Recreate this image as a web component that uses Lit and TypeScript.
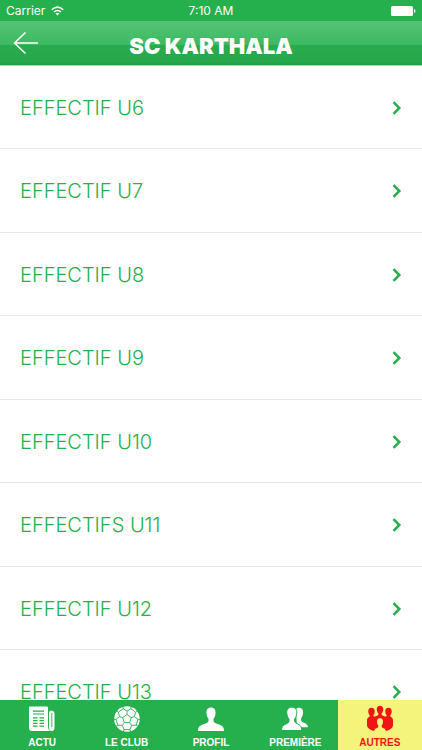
import { LitElement, html, css, svg } from "lit";
import { customElement, state } from "lit/decorators.js";
import { classMap } from "lit/directives/class-map.js";

const icons = {
  news: svg`
    <path fill="#fff" d="M1 .5h17q1 0 1 1v19q0 3.500 2.500 4.500H3Q0 25 0 22V1.500Q0 .5 1 .5z"/>
    <path fill="#fff" d="M20 7q0-2.500 2.500-2.500T25.500 7v14.500q0 3.500-2.700 3.500-2.800 0-2.800-3.500z"/>
    <path stroke="#25b04d" stroke-width=".9" fill="none" d="M22.800 7v14"/>
    <path stroke="#25b04d" stroke-width="1.200" fill="none" d="M4 5.200h11M4 8h11M4 11.800h4.500M10.500 11.800H15M4 14.600h4.500M10.500 14.600H15M4 17.400h4.500M10.500 17.400H15M4 20.200h4.500M10.500 20.200H15"/>`,
  ball: svg`
    <circle cx="13" cy="13" r="12.800" fill="#fff"/>
    <path fill="none" stroke="#25b04d" stroke-width=".9" stroke-linejoin="round" d="M13 8.500l4.300 3.100-1.600 5h-5.400l-1.600-5zM13 8.500V5.200M17.300 11.600l3.100-1M15.700 16.600l1.900 2.700M10.300 16.600l-1.900 2.700M8.700 11.600l-3.100-1M9.200 2.700L13 5.200l3.800-2.500 4.900 3.500-1.300 4.400 3.600 2.800-1.900 5.800-4.500.1L16 23.600h-6l-1.600-4.300-4.500-.1L2 13.400l3.600-2.800-1.300-4.400zM9.200 2.700L8.800 0M16.800 2.700l.4-2.700M21.700 6.200l2.300-1.600M24 13.400h2M22.100 19.200l2 1.400M16 23.600l.6 2.400M10 23.600L9.400 26M3.900 19.200l-2 1.400M2 13.400H0M4.300 6.200L2 4.600"/>`,
  person: svg`
    <path fill="#fff" d="M13 1.500c3.300 0 4.700 2.300 4.500 5.200-.1 3-.9 4.800-2 6v2.500c.3 1.600 2.500 2.200 5.500 3.300 3.400 1.200 5 2.500 5 6.500H0c0-4 1.600-5.300 5-6.500 3-1.100 5.200-1.700 5.500-3.300v-2.500c-1.100-1.200-1.900-3-2-6C8.300 3.800 9.700 1.500 13 1.500z"/>`,
  pair: svg`
    <path fill="#fff" d="M14 3c1-1 2.500-1.500 3.700-1.300 2.500.2 3.500 2.300 3.300 5-.1 2.400-.8 4.300-1.900 5.500v2.100c.4 1.500 1.700 2 3.400 2.700 2.300 1 3.300 2 3.500 4.200H15z"/>
    <path fill="#fff" stroke="#25b04d" stroke-width="1" d="M9.800 1.200c3.700 0 5.200 2.500 5 5.700-.1 2.500-.9 4.600-2.200 6v2.300c.5 1.700 2 2.300 3.800 3.200 2.500 1.200 3.200 2.700 3.400 6.100H-.5c.1-3.400 1.100-4.900 3.500-6.100 1.900-.9 3.700-1.400 4-3v-2.500c-1.300-1.400-2-3.500-2.200-6C4.600 3.700 6.100 1.200 9.800 1.200z"/>`,
  team: svg`
    <path fill="#f01414" d="M13-.3c2.300 0 3.300 1.600 3.200 3.700-.1 1.800-.6 3-1.500 3.900v1.500c.5.9 1.800 1.200 3 1.600h1.500l.5-1.200c-.9-.9-1.300-2-1.400-3.700-.1-2.200.9-3.700 3.200-3.700s3.300 1.500 3.200 3.700c-.1 1.700-.6 2.800-1.400 3.700v1.300c1.600.8 2.700 1.800 2.700 4v5c-.3 2.300-2.500 4.200-6 5.200H6c-3.500-1-5.700-2.900-6-5.200v-5c0-2.200 1.100-3.200 2.700-4V9.200c-.8-.9-1.300-2-1.400-3.700C1.200 3.300 2.200 1.800 4.500 1.800s3.300 1.500 3.200 3.700c-.1 1.700-.5 2.800-1.400 3.700l.5 1.200h1.500c1.200-.4 2.500-.7 3-1.600V7.300c-.9-.9-1.400-2.100-1.500-3.900C9.700 1.300 10.700-.3 13-.3z"/>
    <path fill="#f4f47c" d="M13 12.200c2.200 0 3.100 1.500 3 3.500-.1 1.700-.6 2.900-1.300 3.600v1.400c.3 1 1.500 1.300 2.600 1.900 1 .5 1.300 1.500 1.400 3.400H7.300c.1-1.900.4-2.900 1.400-3.400 1.100-.6 2.300-.9 2.600-1.900v-1.400c-.7-.7-1.200-1.900-1.300-3.600-.1-2 .8-3.500 3-3.500z"/>`,
};

@customElement("app-root")
export class AppRoot extends LitElement {
  static styles = css`
    :host {
      display: flex;
      flex-direction: column;
      height: 100vh;
      overflow: hidden;
      background: #fff;
      color: #25b04d;
      font-family: "Liberation Sans", Arial, sans-serif;
    }
    .status {
      flex: none;
      height: 21px;
      padding: 0 6px;
      display: grid;
      grid-template-columns: 1fr auto 1fr;
      align-items: center;
      background: #25b04d;
      color: #fff;
      font: 12px/21px Inter, sans-serif;
    }
    .carrier {
      display: flex;
      align-items: center;
      gap: 6px;
    }
    .battery {
      justify-self: end;
    }
    svg {
      display: block;
    }
    .bar {
      flex: none;
      box-sizing: border-box;
      height: 45px;
      padding: 0 12px;
      display: grid;
      grid-template-columns: 1fr auto 1fr;
      align-items: center;
      border-bottom: 1px solid #a5e0b7;
      background: linear-gradient(#54c475, #3cb962 54%, #28ab4e 55%, #27a74b 94%, #259a45);
    }
    .back {
      justify-self: start;
      padding: 0;
      border: 0;
      background: none;
      cursor: pointer;
    }
    h1 {
      margin: 0;
      padding-top: 6px;
      color: #fff;
      font: 900 22px/24px Inter, sans-serif;
    }
    .list {
      flex: 1;
      min-height: 0;
      overflow: hidden;
      margin: 0;
      padding: 0;
      list-style: none;
      display: grid;
      grid-auto-rows: 83px 84px;
    }
    .row {
      box-sizing: border-box;
      height: 100%;
      padding: 1px 20px 0;
      display: flex;
      align-items: center;
      justify-content: space-between;
      border-bottom: 1px solid #e8e8e8;
      color: inherit;
      text-decoration: none;
      font: 300 20px/24px Inter, sans-serif;
    }
    .tabs {
      flex: none;
      height: 50px;
      display: grid;
      grid-template-columns: repeat(5, 1fr);
      background: #25b04d;
    }
    .tab {
      padding: 6px 0 0;
      border: 0;
      display: flex;
      flex-direction: column;
      align-items: center;
      gap: 5px;
      background: none;
      color: #fff;
      font: bold 10px/12px "Liberation Sans", Arial, sans-serif;
      cursor: pointer;
    }
    .tab.active {
      background: #f4f47c;
      color: #f01414;
    }
    .tab svg {
      overflow: visible;
    }
  `;

  @state() private active = "AUTRES";

  private teams = [
    "EFFECTIF U6",
    "EFFECTIF U7",
    "EFFECTIF U8",
    "EFFECTIF U9",
    "EFFECTIF U10",
    "EFFECTIFS U11",
    "EFFECTIF U12",
    "EFFECTIF U13",
  ];

  private tabs = [
    { label: "ACTU", icon: icons.news },
    { label: "LE CLUB", icon: icons.ball },
    { label: "PROFIL", icon: icons.person },
    { label: "PREMIÈRE", icon: icons.pair },
    { label: "AUTRES", icon: icons.team },
  ];

  render() {
    return html`
      <div class="status">
        <span class="carrier">Carrier
          <svg width="13" height="10" viewBox="0 0 13 10" fill="none" stroke="#fff" stroke-width="1.500">
            <path d="M.8 3.700q5.700-5.200 11.400 0M3 6q3.500-3.100 7 0" />
            <path d="M4.500 7.600q2-1.700 4 0l-2 2z" fill="#fff" stroke="none" />
          </svg>
        </span>
        <span>7:10 AM</span>
        <svg class="battery" width="25" height="10" viewBox="0 0 25 10" fill="#fff">
          <rect width="22" height="10" rx="1.500" />
          <path d="M23 3q1.500.5 1.500 2T23 7z" />
        </svg>
      </div>
      <header class="bar">
        <button class="back" aria-label="Retour">
          <svg width="28" height="24" viewBox="0 0 28 24" fill="none" stroke="#fff" stroke-width="1.500">
            <path d="M13.500 1.500L2.500 12l11 10.500M2.500 12H26" />
          </svg>
        </button>
        <h1>SC KARTHALA</h1>
      </header>
      <ul class="list">
        ${this.teams.map(
          (team) => html`<li>
            <a class="row" href="#">
              <span>${team}</span>
              <svg width="10" height="14" viewBox="0 0 10 14" fill="none" stroke="#25b04d" stroke-width="2.500">
                <path d="M1.500 1.200L7.300 7l-5.800 5.800" />
              </svg>
            </a>
          </li>`
        )}
      </ul>
      <nav class="tabs">
        ${this.tabs.map(
          (tab) => html`<button
            class=${classMap({ tab: true, active: tab.label === this.active })}
            @click=${() => (this.active = tab.label)}
          >
            <svg width="26" height="26" viewBox="0 0 26 26">${tab.icon}</svg>
            <span>${tab.label}</span>
          </button>`
        )}
      </nav>
    `;
  }
}
